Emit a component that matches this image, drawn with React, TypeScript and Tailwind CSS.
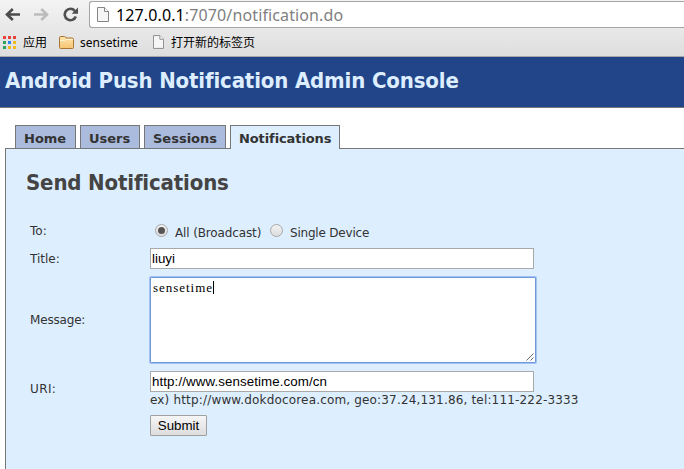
import type { ReactNode } from "react";

const ui = "font-['DejaVu_Sans',Verdana,sans-serif]";
const condensed = "font-['DejaVu_Sans_Condensed','DejaVu_Sans',Tahoma,sans-serif] [font-stretch:condensed]";
const arial = "font-['Liberation_Sans',Arial,sans-serif]";

function PageIcon({ className }: { className: string }) {
  return (
    <svg className={className} viewBox="0 0 12 15" fill="none">
      <path d="M.5.5h7l4 4v10H.5z" fill="#f6f6f6" stroke="#858585" />
      <path d="M7.5.5v4h4" fill="#fff" stroke="#858585" />
    </svg>
  );
}

function AppsIcon() {
  const colors = ["#e8433a", "#e8433a", "#e8433a", "#2fa35b", "#2f86ed", "#f5b921", "#2fa35b", "#f5b921", "#f5b921"];
  return (
    <div className="ml-[3px] grid w-[13px] grid-cols-3 gap-[2px]">
      {colors.map((c, i) => (
        <span key={i} className="size-[3px]" style={{ backgroundColor: c }} />
      ))}
    </div>
  );
}

function FolderIcon() {
  return (
    <svg className="h-[13px] w-[15px]" viewBox="0 0 15 13">
      <defs>
        <linearGradient id="folder" x1="0" y1="0" x2="0" y2="1">
          <stop offset="0" stopColor="#ffe7ad" />
          <stop offset="1" stopColor="#f6c372" />
        </linearGradient>
      </defs>
      <path d="M.5 11.5V2Q.5.5 2 .5h3.5Q6.500.5 7 2h6q1.500 0 1.500 1.500v8q0 1-1 1h-12q-1 0-1-1z" fill="url(#folder)" stroke="#a87635" />
      <path d="M1 4.500h5l1-1h7" fill="none" stroke="#fff2cf" />
    </svg>
  );
}

function Toolbar() {
  return (
    <div className="flex h-[28px] items-start">
      <svg className="mt-[7px] ml-[5px] h-[15px] w-[15px]" viewBox="0 0 15 15" fill="none" stroke="#4b4b4b" strokeWidth="2.600">
        <path d="M15 7.500H2M7.800 2 2 7.500l5.800 5.500" />
      </svg>
      <svg className="mt-[7px] ml-[14px] h-[15px] w-[15px]" viewBox="0 0 15 15" fill="none" stroke="#bcbcbc" strokeWidth="2.600">
        <path d="M0 7.500H13M7.200 2l5.800 5.500L7.200 13" />
      </svg>
      <svg className="mt-[7px] ml-[14px] h-[15px] w-[15px]" viewBox="0 0 15 15" fill="none">
        <path d="M12.800 9.500A5.700 5.700 0 1 1 11.800 3.800" stroke="#4f4f4f" strokeWidth="2.600" />
        <path d="M15 .5v6.300H8.700z" fill="#4f4f4f" />
      </svg>
      <div className="mt-px ml-[11px] flex h-[27px] flex-1 items-center rounded-l-[3px] border border-r-0 border-[#a5a5a5] bg-white pl-[7px]">
        <PageIcon className="h-[15px] w-[12px]" />
        <span className="ml-[7px] font-['Noto_Sans',sans-serif] text-[16px] leading-[26px] tracking-[0.120px] whitespace-nowrap text-black">
          127.0.0.1<span className="text-[#808080]">:7070/notification.do</span>
        </span>
      </div>
    </div>
  );
}

function Bookmarks() {
  return (
    <div className="flex h-[28px] items-center font-['Noto_Sans_CJK_SC',sans-serif] text-[12px] leading-[16px] text-black">
      <AppsIcon />
      <span className="ml-[7px]">应用</span>
      <span className="ml-[12px]"><FolderIcon /></span>
      <span className="ml-[6px] pt-px font-['Noto_Sans',sans-serif]">sensetime</span>
      <PageIcon className="ml-[15px] h-[14px] w-[11px]" />
      <span className="ml-[7px]">打开新的标签页</span>
    </div>
  );
}

function Tab({ children, className }: { children: ReactNode; className: string }) {
  return (
    <div className={`border border-b-0 border-[#777] pt-[5px] pl-[8px] text-[13px] leading-[16px] font-bold whitespace-nowrap text-[#333] ${className}`}>
      {children}
    </div>
  );
}

function Radio({ checked = false }: { checked?: boolean }) {
  return (
    <span className="flex size-[13px] items-center justify-center rounded-full border border-[#a8a8a8] bg-linear-to-b from-[#f2f2f2] to-[#dcdcdc]">
      {checked && <span className="size-[7px] rounded-full bg-[#555]" />}
    </span>
  );
}

function TextField({ value, className = "" }: { value: string; className?: string }) {
  return (
    <div className={`h-[21px] w-[384px] border border-[#a9a9a9] bg-white pl-px text-[13.333px] leading-[19px] text-black ${arial} ${className}`}>
      {value}
    </div>
  );
}

function Row({ label, className, labelClass = "", children }: { label: string; className: string; labelClass?: string; children: ReactNode }) {
  return (
    <div className={`flex items-center ${className}`}>
      <span className={`w-[120px] shrink-0 ${labelClass}`}>{label}</span>
      {children}
    </div>
  );
}

export default function App() {
  return (
    <div className={`h-[469px] w-[684px] overflow-hidden bg-white ${ui}`}>
      <div className="h-[57px] border-b border-[#a6a6a6] bg-linear-to-b from-[#f3f3f3] to-[#dedede]">
        <Toolbar />
        <Bookmarks />
      </div>
      <header className="flex h-[51px] items-center border-b border-[#777] bg-[#224488] pb-[2px] pl-[5px]">
        <h1 className={`text-[22px] leading-[26px] font-bold tracking-[-0.150px] whitespace-nowrap text-[#ddeeff] ${condensed}`}>
          Android Push Notification Admin Console
        </h1>
      </header>
      <nav className="flex h-[40px] items-start gap-[4px] pt-[17px] pl-[15px]">
        <Tab className="h-[23px] w-[61px] bg-[#aabbdd]">Home</Tab>
        <Tab className="h-[23px] w-[60px] bg-[#aabbdd]">Users</Tab>
        <Tab className="h-[23px] w-[82px] bg-[#aabbdd]">Sessions</Tab>
        <Tab className="z-10 h-[24px] w-[110px] bg-[#ddeeff] tracking-[-0.100px]">Notifications</Tab>
      </nav>
      <main className="ml-[5px] h-[321px] border-t border-l border-[#777] bg-[#ddeeff] pt-[20px] pl-[20px]">
        <h2 className={`text-[22px] leading-[28px] font-bold tracking-[-0.150px] text-[#444] ${condensed}`}>Send Notifications</h2>
        <form className="pt-[23px] pl-[4px] text-[12px] leading-[15px] whitespace-nowrap text-[#333]">
          <Row label="To:" className="h-[20px]" labelClass="pt-[2px]">
            <span className="ml-[5px]"><Radio checked /></span>
            <span className="mt-[6px] ml-[7px] w-[86px] tracking-[-0.130px]">All (Broadcast)</span>
            <span className="ml-[9px]"><Radio /></span>
            <span className="mt-[6px] ml-[7px] tracking-[-0.200px]">Single Device</span>
          </Row>
          <Row label="Title:" className="mt-[8px] h-[21px]" labelClass="pt-[1px]">
            <TextField value="liuyi" />
          </Row>
          <Row label="Message:" className="mt-[8px] h-[86px]" labelClass="tracking-[-0.180px]">
            <div className="flex h-[86px] w-[386px] justify-between rounded-[1px] border border-[#7197dd] bg-white shadow-[0_0_0_1px_#a3c3f5]">
              <div className="flex h-fit items-center pt-[2px] pl-[2px]">
                <span className="font-['Liberation_Serif',SimSun,serif] text-[13px] tracking-[0.970px] text-black">sensetime</span>
                <span className="h-[13px] w-px bg-black" />
              </div>
              <svg className="mr-px mb-px size-[8px] self-end" viewBox="0 0 8 8" stroke="#555" strokeWidth=".9">
                <path d="M.5 7.500 7.500.5M4.500 7.500l3-3" />
              </svg>
            </div>
          </Row>
          <Row label="URI:" className="mt-[8px] h-[36px]" labelClass="tracking-[0.400px]">
            <div>
              <TextField value="http://www.sensetime.com/cn" className="tracking-[0.090px]" />
              <div className="pt-px leading-[14px] tracking-[0.170px]">ex) http://www.dokdocorea.com, geo:37.24,131.86, tel:111-222-3333</div>
            </div>
          </Row>
          <button type="button" className={`mt-[8px] ml-[120px] block h-[21px] w-[57px] rounded-[1px] border border-[#a0a0a0] bg-linear-to-b from-[#f6f6f6] to-[#dddddd] text-[13.333px] leading-[19px] text-black ${arial}`}>
            Submit
          </button>
        </form>
      </main>
    </div>
  );
}
